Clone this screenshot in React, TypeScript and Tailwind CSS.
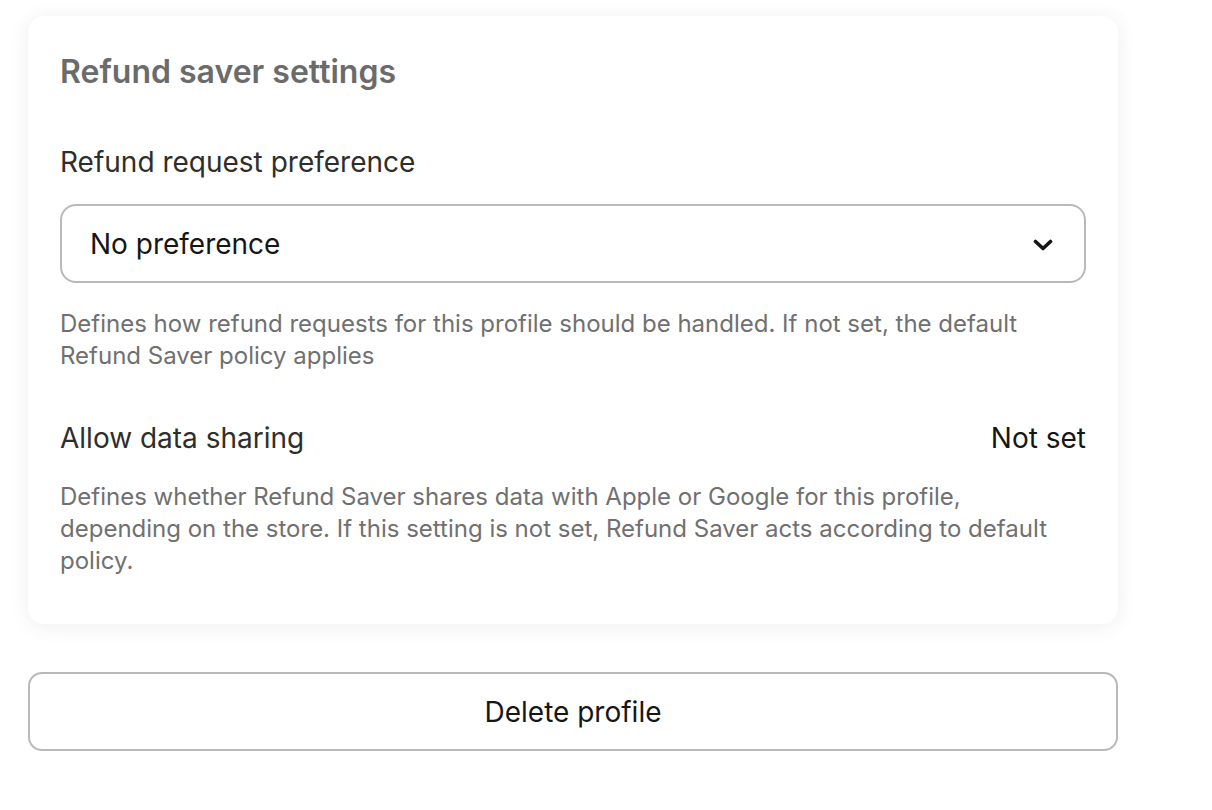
export default function App() {
  return (
    <div className="min-h-screen bg-white px-[28px] pt-4 font-['Inter','Noto_Sans',sans-serif]">
      <div className="w-[1090px]">
        <section className="rounded-2xl bg-white px-8 pt-[36px] pb-[47px] shadow-[0_2px_22px_rgba(20,20,40,0.07)]">
          <h2 className="text-[32px] font-semibold leading-10 text-[#6b6b6b]">
            Refund saver settings
          </h2>

          <label className="mt-[54px] block text-[28px] leading-8 text-[#2e2e2b]">
            Refund request preference
          </label>
          <button className="mt-[26px] flex h-[79px] w-full items-center justify-between rounded-2xl border-2 border-[#b9b9b9] bg-white pl-[28px] pr-[31px] text-left">
            <span className="text-[28px] leading-8 text-[#161616]">No preference</span>
            <svg width="20" height="12" viewBox="0 0 20 12" fill="none" className="mt-[2px]">
              <path
                d="M2.5 2.5 10 9.5l7.5-7"
                stroke="#161616"
                strokeWidth="3.6"
                strokeLinecap="round"
                strokeLinejoin="round"
              />
            </svg>
          </button>
          <p className="mt-[25px] text-[24px] leading-8 text-[#707070]">
            Defines how refund requests for this profile should be handled. If not set, the default
            Refund Saver policy applies
          </p>

          <div className="mt-[50px] flex items-center justify-between text-[28px] leading-8">
            <span className="text-[#2e2e2b]">Allow data sharing</span>
            <span className="text-[#161616]">Not set</span>
          </div>
          <p className="mt-[27px] text-[24px] leading-8 text-[#707070]">
            Defines whether Refund Saver shares data with Apple or Google for this profile,
            depending on the store. If this setting is not set, Refund Saver acts according to
            default policy.
          </p>
        </section>

        <button className="mt-12 flex h-[79px] w-full items-center justify-center rounded-[14px] border-2 border-[#b9b9b9] bg-white text-[28px] leading-8 text-[#161616]">
          Delete profile
        </button>
      </div>
    </div>
  );
}
